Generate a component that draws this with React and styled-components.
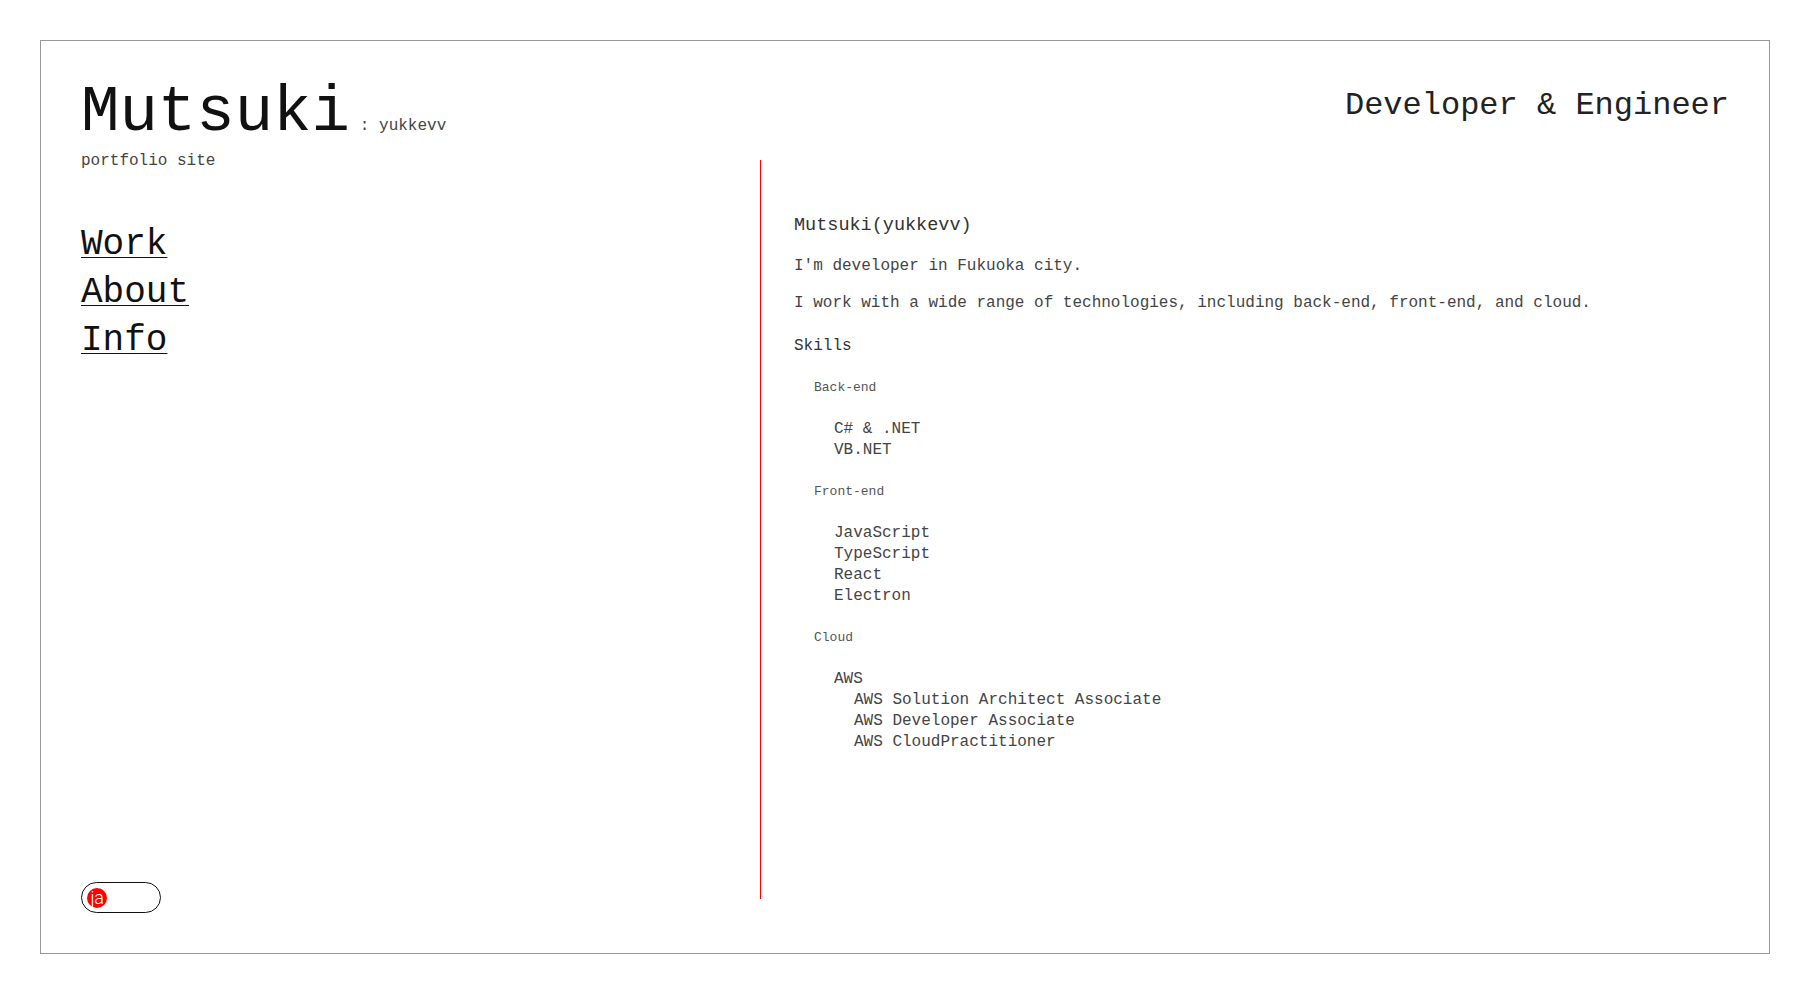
import React from "react";
import styled, { createGlobalStyle } from "styled-components";

const GlobalStyle = createGlobalStyle`
  html, body { margin: 0; padding: 0; background: #fff; }
  body { font-family: "Liberation Mono", "DejaVu Sans Mono", monospace; color: #333; }
  * { box-sizing: border-box; }
`;

const Frame = styled.div`
  margin: 40px;
  height: calc(100vh - 80px);
  border: 1px solid #999;
  padding: 40px;
  display: grid;
  grid-template-columns: 679px 1fr;
`;

const LeftColumn = styled.div`
  display: flex;
  flex-direction: column;
  min-height: 0;
`;

const TitleRow = styled.div`
  display: flex;
  align-items: baseline;
`;

const Title = styled.h1`
  margin: 0;
  font-size: 64px;
  line-height: 64px;
  font-weight: 400;
  color: #111;
  letter-spacing: 0;
`;

const Handle = styled.span`
  font-size: 16px;
  color: #444;
  margin-left: 10px;
`;

const Subtitle = styled.p`
  margin: 7px 0 0;
  font-size: 16px;
  line-height: 18px;
  color: #444;
`;

const Nav = styled.nav`
  margin-top: 51px;
  display: flex;
  flex-direction: column;
  align-items: flex-start;
`;

const NavLink = styled.a`
  font-size: 36px;
  line-height: 48px;
  color: #111;
  text-decoration: underline;
  text-underline-offset: 3px;
  text-decoration-thickness: 1px;
`;

const Toggle = styled.div`
  margin-top: auto;
  width: 80px;
  height: 31px;
  border: 1.5px solid #111;
  border-radius: 16px;
  display: flex;
  align-items: center;
  padding-left: 5px;
`;

const Knob = styled.span`
  width: 20px;
  height: 20px;
  border-radius: 50%;
  background: #ff0000;
  color: #fff;
  font-family: "Roboto", "Liberation Sans", sans-serif;
  font-size: 18px;
  font-weight: 300;
  line-height: 19px;
  display: flex;
  justify-content: center;
  letter-spacing: -0.5px;
`;

const RightColumn = styled.div`
  display: flex;
  flex-direction: column;
  min-height: 0;
`;

const Role = styled.div`
  margin-top: 7px;
  text-align: right;
  font-size: 32px;
  line-height: 36px;
  color: #222;
`;

const Content = styled.section`
  flex: 1;
  margin-top: 36px;
  margin-bottom: 14px;
  border-left: 1px solid #ff0000;
  padding-left: 33px;
  padding-top: 54px;
`;

const Name = styled.h2`
  margin: 0;
  font-size: 18.5px;
  line-height: 24px;
  font-weight: 400;
  color: #333;
`;

const Para = styled.p`
  margin: ${(p) => p.$mt}px 0 0;
  font-size: 16px;
  line-height: 21px;
  color: #444;
`;

const SkillsTitle = styled.h3`
  margin: 22px 0 0;
  font-size: 16px;
  line-height: 21px;
  font-weight: 400;
  color: #333;
`;

const Category = styled.h4`
  margin: 22px 0 0 20px;
  font-size: 13px;
  line-height: 17px;
  font-weight: 400;
  color: #555;
`;

const List = styled.ul`
  list-style: none;
  margin: ${(p) => (p.$nested ? 0 : 23)}px 0 0 ${(p) => (p.$nested ? 20 : 40)}px;
  padding: 0;
`;

const Item = styled.li`
  font-size: 16px;
  line-height: 21px;
  color: #444;
`;

const skills = [
  { name: "Back-end", items: [{ label: "C# & .NET" }, { label: "VB.NET" }] },
  {
    name: "Front-end",
    items: [
      { label: "JavaScript" },
      { label: "TypeScript" },
      { label: "React" },
      { label: "Electron" },
    ],
  },
  {
    name: "Cloud",
    items: [
      {
        label: "AWS",
        children: [
          "AWS Solution Architect Associate",
          "AWS Developer Associate",
          "AWS CloudPractitioner",
        ],
      },
    ],
  },
];

export default function App() {
  return (
    <>
      <GlobalStyle />
      <Frame>
        <LeftColumn>
          <TitleRow>
            <Title>Mutsuki</Title>
            <Handle>: yukkevv</Handle>
          </TitleRow>
          <Subtitle>portfolio site</Subtitle>
          <Nav>
            <NavLink href="#work">Work</NavLink>
            <NavLink href="#about">About</NavLink>
            <NavLink href="#info">Info</NavLink>
          </Nav>
          <Toggle>
            <Knob>ja</Knob>
          </Toggle>
        </LeftColumn>
        <RightColumn>
          <Role>Developer &amp; Engineer</Role>
          <Content>
            <Name>Mutsuki(yukkevv)</Name>
            <Para $mt={18}>I'm developer in Fukuoka city.</Para>
            <Para $mt={16}>
              I work with a wide range of technologies, including back-end, front-end, and cloud.
            </Para>
            <SkillsTitle>Skills</SkillsTitle>
            {skills.map((group) => (
              <React.Fragment key={group.name}>
                <Category>{group.name}</Category>
                <List>
                  {group.items.map((it) => (
                    <Item key={it.label}>
                      {it.label}
                      {it.children && (
                        <List $nested>
                          {it.children.map((c) => (
                            <Item key={c}>{c}</Item>
                          ))}
                        </List>
                      )}
                    </Item>
                  ))}
                </List>
              </React.Fragment>
            ))}
          </Content>
        </RightColumn>
      </Frame>
    </>
  );
}
